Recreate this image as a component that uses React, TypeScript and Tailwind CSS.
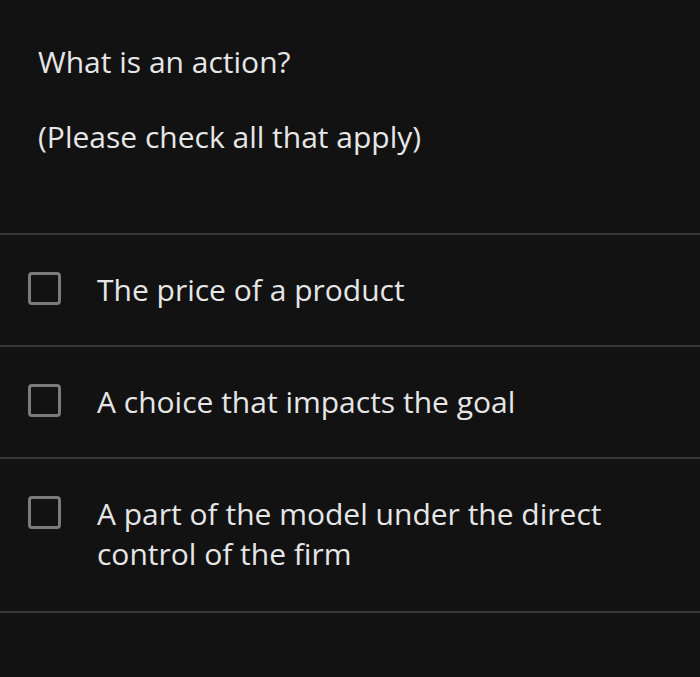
import React from 'react';

const options = [
  'The price of a product',
  'A choice that impacts the goal',
  'A part of the model under the direct control of the firm',
];

export default function App() {
  return (
    <div className="min-h-[677px] bg-[#121212] text-[#e6e6e6] font-['Open_Sans',sans-serif] text-[30px] leading-[40px]">
      <div className="pl-[38px] pt-[42px] pb-[76px] flex flex-col gap-[35px]">
        <p>What is an action?</p>
        <p>(Please check all that apply)</p>
      </div>
      <div className="border-t-2 border-[#393939]">
        {options.map((option, index) => (
          <label key={index} className="flex items-start gap-[36px] pl-[28px] pr-[40px] py-[35px] last:pb-[37px] border-b-2 border-[#393939]">
            <span className="mt-[2px] shrink-0 w-[33px] h-[33px] border-[3px] border-[#7b7b7b] rounded-[4px]" />
            <span className="max-w-[520px]">{option}</span>
          </label>
        ))}
      </div>
    </div>
  );
}
